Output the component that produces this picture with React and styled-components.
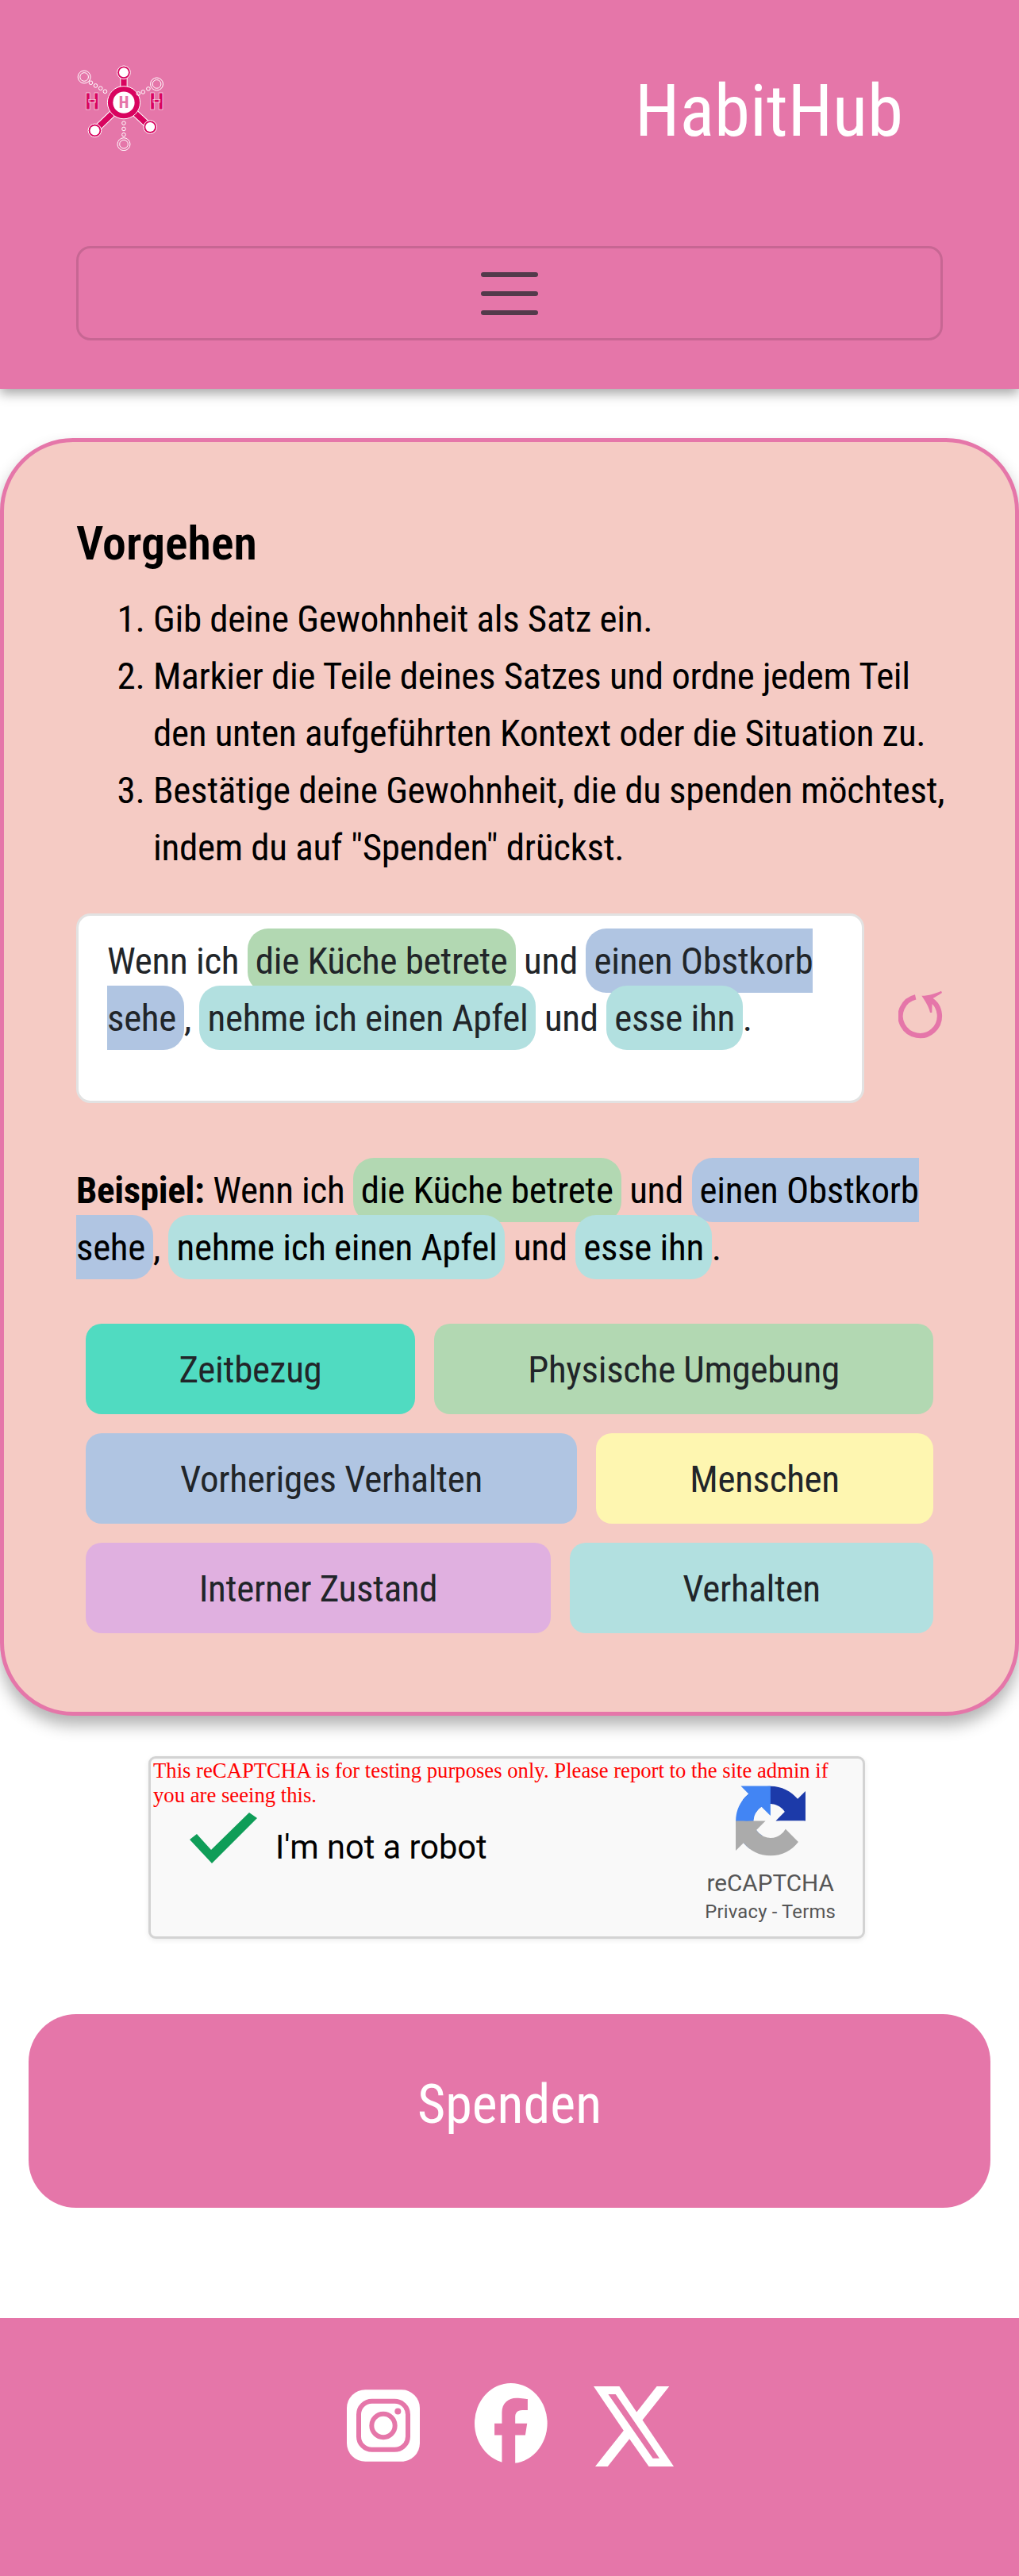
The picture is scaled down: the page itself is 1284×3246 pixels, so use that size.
import React from 'react';
import styled, { createGlobalStyle } from 'styled-components';

const pink = '#e576a9';
const crimson = '#d8045f';

const Global = createGlobalStyle`
  html, body { margin: 0; padding: 0; background: #fff; }
  body {
    font-family: Roboto, sans-serif;
    font-stretch: 75%;
    color: #000;
  }
`;

const Page = styled.div`
  width: 1284px;
  height: 3246px;
  overflow: hidden;
  display: flex;
  flex-direction: column;
`;

const Header = styled.header`
  height: 490px;
  flex: none;
  box-sizing: border-box;
  padding: 82px 96px 0;
  background: ${pink};
  box-shadow: 0 6px 14px rgba(0, 0, 0, 0.35);
  position: relative;
`;

const Brand = styled.div`
  display: flex;
  justify-content: space-between;
  align-items: flex-start;
  height: 228px;
  padding-right: 50px;
`;

const Title = styled.div`
  color: #fff;
  font-size: 91px;
  font-weight: 400;
  line-height: 110px;
  margin-top: 3px;
`;

const Toggle = styled.button`
  display: flex;
  width: 100%;
  height: 119px;
  align-items: center;
  justify-content: center;
  background: transparent;
  border: 3px solid rgba(0, 0, 0, 0.13);
  border-radius: 18px;
  padding: 0;
`;

const Card = styled.main`
  margin-top: 62px;
  height: 1610px;
  flex: none;
  box-sizing: border-box;
  padding: 92px 91px 0;
  background: #f5cbc4;
  border: 5px solid ${pink};
  border-radius: 92px;
  box-shadow: 0 12px 20px rgba(0, 0, 0, 0.3);
`;

const Heading = styled.h2`
  margin: 0 0 23px;
  font-size: 60px;
  line-height: 72px;
  font-weight: 600;
  font-stretch: 75%;
`;

const Steps = styled.ol`
  margin: 0 -20px 47px 0;
  padding: 0 0 0 97px;
  font-size: 47px;
  line-height: 72px;
  letter-spacing: -0.3px;
`;

const EditorRow = styled.div`
  display: flex;
  align-items: center;
  justify-content: space-between;
`;

const Editor = styled.div`
  width: 993px;
  height: 239px;
  box-sizing: border-box;
  padding: 21px 36px;
  background: #fff;
  border: 3px solid #e2e2e2;
  border-radius: 18px;
  font-size: 47px;
  line-height: 72px;
  letter-spacing: -0.3px;
  color: #212529;
`;

const Pill = styled.span`
  background: ${(p) => p.$bg};
  padding: 13px 10px;
  border-radius: 26px;
`;

const Example = styled.p`
  margin: 74px 0 0;
  font-size: 47px;
  line-height: 72px;
  letter-spacing: -0.3px;
`;

const ChipGrid = styled.div`
  margin-top: 60px;
  padding: 0 12px;
  display: flex;
  flex-direction: column;
  gap: 24px;
`;

const ChipRow = styled.div`
  display: flex;
  gap: 24px;
`;

const Chip = styled.div`
  flex: ${(p) => (p.$w ? `0 0 ${p.$w}px` : '1 1 0')};
  height: 114px;
  display: flex;
  align-items: center;
  justify-content: center;
  background: ${(p) => p.$bg};
  border-radius: 20px;
  color: #212529;
  font-size: 47px;
  letter-spacing: -0.3px;
`;

const Captcha = styled.section`
  position: relative;
  align-self: center;
  flex: none;
  width: 903px;
  height: 230px;
  margin: 51px 0 0 -7px;
  box-sizing: border-box;
  background: #f9f9f9;
  border: 3px solid #d3d3d3;
  border-radius: 9px;
  box-shadow: 0 2px 6px rgba(0, 0, 0, 0.08);
  display: flex;
  justify-content: space-between;
  padding: 34px 34px 0 49px;
`;

const CaptchaWarning = styled.div`
  position: absolute;
  left: 3px;
  top: 0;
  right: 25px;
  color: #f00;
  font-family: "Liberation Serif", serif;
  font-stretch: 100%;
  font-size: 26.7px;
  line-height: 31px;
`;

const CheckArea = styled.div`
  display: flex;
  align-items: flex-end;
  gap: 23px;
  height: 98px;
`;

const CheckLabel = styled.span`
  font-stretch: 100%;
  font-size: 41.6px;
  line-height: 56px;
  margin-bottom: -8px;
  color: #000;
`;

const Badge = styled.div`
  display: flex;
  flex-direction: column;
  align-items: center;
  font-stretch: 100%;
  color: #555;
`;

const BadgeName = styled.div`
  margin-top: 16px;
  font-size: 29.7px;
  line-height: 36px;
`;

const BadgeLinks = styled.div`
  font-size: 23.8px;
  line-height: 36px;
  letter-spacing: 0.2px;
`;

const Donate = styled.button`
  margin: 95px 36px 0;
  height: 244px;
  flex: none;
  padding: 0 0 16px;
  background: ${pink};
  border: 0;
  border-radius: 60px;
  color: #fff;
  font-family: inherit;
  font-stretch: 75%;
  font-size: 68px;
  font-weight: 400;
`;

const Footer = styled.footer`
  margin-top: 139px;
  flex: 1;
  background: ${pink};
  display: flex;
  justify-content: center;
  align-items: flex-start;
  padding: 82px 0 0 2px;
  gap: 58px;
`;

const LogoLetter = styled.text`
  font-family: Roboto, sans-serif;
  font-stretch: 75%;
  font-weight: 800;
  text-anchor: middle;
`;

const Logo = () => (
  <svg width="110" height="108" viewBox="105 70 330 325">
    <path d="M285 100V212M175 318L285 212L385 305" fill="none" stroke="#fff" strokeWidth="28" />
    <path d="M285 100V212M175 318L285 212L385 305" fill="none" stroke={crimson} strokeWidth="22" />
    <circle cx="285" cy="212" r="62" fill={crimson} stroke="#fff" strokeWidth="3" />
    <circle cx="285" cy="212" r="41" fill="#fff" />
    <LogoLetter x="285" y="234" fontSize="62" fill={pink}>H</LogoLetter>
    {[[285, 98], [175, 318], [385, 305]].map(([x, y]) => (
      <g key={x}>
        <circle cx={x} cy={y} r="25" fill={crimson} stroke="#fff" strokeWidth="3" />
        <circle cx={x} cy={y} r="18" fill="#fff" />
      </g>
    ))}
    <g fill="none" stroke="#fff" strokeWidth="3">
      {[[135, 115], [410, 142], [285, 370]].map(([x, y]) => (
        <g key={x}>
          <circle cx={x} cy={y} r="24" />
          <circle cx={x} cy={y} r="16" />
        </g>
      ))}
      {[[160, 137], [178, 148], [197, 158], [214, 170], [340, 178], [358, 172], [378, 160], [285, 290], [285, 312], [285, 334]].map(([x, y]) => (
        <circle key={x + '-' + y} cx={x} cy={y} r="7" />
      ))}
    </g>
    <g fontSize="90" fill={crimson} stroke="#fff" strokeWidth="1.5">
      <LogoLetter x="165" y="240">H</LogoLetter>
      <LogoLetter x="410" y="240">H</LogoLetter>
    </g>
  </svg>
);

const Bars = () => (
  <svg width="72" height="54" viewBox="0 0 72 54">
    <g fill="#533a4b">
      <rect x="0" y="0" width="72" height="6" rx="3" />
      <rect x="0" y="24" width="72" height="6" rx="3" />
      <rect x="0" y="48" width="72" height="6" rx="3" />
    </g>
  </svg>
);

const ResetSvg = styled.svg`
  margin-top: 16px;
`;

const ResetIcon = () => (
  <ResetSvg width="56" height="61" viewBox="70 68 168 183">
    <path d="M135 93A74 74 0 1 0 192 103" fill="none" stroke={pink} strokeWidth="19" />
    <path fill={pink} d="M158 88C185 88 210 80 232 70L235 77C220 88 205 95 198 100L197 152L190 152C185 130 172 108 158 88Z" />
  </ResetSvg>
);

const Check = () => (
  <svg width="85" height="64" viewBox="0 0 85 64">
    <path d="M0 34L9 27L27 47L75 0L85 7L28 64Z" fill="#0f9d58" />
  </svg>
);

const ARROW = 'M64 31.955l-.033-1.37V4.687l-7.16 7.16C50.948 4.674 42.033.093 32.05.093c-10.39 0-19.62 4.958-25.455 12.636l11.735 11.86a15.564 15.564 0 0 1 4.754-5.32c2.05-1.6 4.952-2.906 8.96-2.906.484 0 .858.057 1.133.163 4.967.392 9.273 3.133 11.81 7.11l-8.307 8.307c10.52-.04 22.4-.066 27.864.003';

const CaptchaLogo = () => (
  <svg width="88" height="89" viewBox="0 0 64 64">
    <path d={ARROW} fill="#1c3aa9" />
    <path d={ARROW} fill="#4285f4" transform="rotate(-90 32 32)" />
    <path d={ARROW} fill="#ababab" transform="rotate(180 32 32)" />
  </svg>
);

const InstagramSvg = styled.svg`
  margin: 8px 11px 0 0;
`;

const XSvg = styled.svg`
  margin-top: 4px;
`;

const Instagram = () => (
  <InstagramSvg width="92" height="91" viewBox="112 152 276 272">
    <rect x="112" y="152" width="276" height="272" rx="70" fill="#fff" />
    <g fill="none" stroke={pink} strokeWidth="18">
      <rect x="157" y="196" width="186" height="183" rx="50" />
      <circle cx="250" cy="288" r="44" />
    </g>
    <circle cx="305" cy="234" r="12" fill={pink} />
  </InstagramSvg>
);

const Facebook = () => (
  <svg width="92" height="101" viewBox="595 130 275 302">
    <ellipse cx="732" cy="281" rx="137" ry="151" fill="#fff" />
    <path fill={pink} d="M698 432V326H670V282H698V240C698 205 722 186 752 186C772 186 795 190 795 190V232H775C755 232 748 244 748 258V282H793L786 326H748V432Z" />
  </svg>
);

const XLogo = () => (
  <XSvg width="101" height="101" viewBox="1045 140 302 302">
    <path fillRule="evenodd" fill="#fff" d="M1045 140H1142L1207 237L1283 140H1330L1229 267L1347 442H1253L1180 338L1098 442H1051L1158 307ZM1100 170H1128L1293 411H1268Z" />
  </XSvg>
);

const colors = {
  time: '#50dbc1',
  place: '#b2d8b2',
  before: '#b0c5e2',
  people: '#fef6b0',
  state: '#e0b0e0',
  action: '#b2e0e0',
};

const Sentence = () => (
  <>
    Wenn ich <Pill $bg={colors.place}>die Küche betrete</Pill> und <Pill $bg={colors.before}>einen Obstkorb<br />sehe</Pill>, <Pill $bg={colors.action}>nehme ich einen Apfel</Pill> und <Pill $bg={colors.action}>esse ihn</Pill>.
  </>
);

export default function App() {
  return (
    <Page>
      <Global />
      <Header>
        <Brand>
          <Logo />
          <Title>HabitHub</Title>
        </Brand>
        <Toggle aria-label="Menü"><Bars /></Toggle>
      </Header>

      <Card>
        <Heading>Vorgehen</Heading>
        <Steps>
          <li>Gib deine Gewohnheit als Satz ein.</li>
          <li>Markier die Teile deines Satzes und ordne jedem Teil den unten aufgeführten Kontext oder die Situation zu.</li>
          <li>Bestätige deine Gewohnheit, die du spenden möchtest, indem du auf "Spenden" drückst.</li>
        </Steps>
        <EditorRow>
          <Editor><Sentence /></Editor>
          <ResetIcon />
        </EditorRow>
        <Example><b>Beispiel:</b> <Sentence /></Example>
        <ChipGrid>
          <ChipRow>
            <Chip $bg={colors.time} $w={415}>Zeitbezug</Chip>
            <Chip $bg={colors.place}>Physische Umgebung</Chip>
          </ChipRow>
          <ChipRow>
            <Chip $bg={colors.before} $w={619}>Vorheriges Verhalten</Chip>
            <Chip $bg={colors.people}>Menschen</Chip>
          </ChipRow>
          <ChipRow>
            <Chip $bg={colors.state} $w={586}>Interner Zustand</Chip>
            <Chip $bg={colors.action}>Verhalten</Chip>
          </ChipRow>
        </ChipGrid>
      </Card>

      <Captcha>
        <CaptchaWarning>This reCAPTCHA is for testing purposes only. Please report to the site admin if you are seeing this.</CaptchaWarning>
        <CheckArea>
          <Check />
          <CheckLabel>I'm not a robot</CheckLabel>
        </CheckArea>
        <Badge>
          <CaptchaLogo />
          <BadgeName>reCAPTCHA</BadgeName>
          <BadgeLinks>Privacy - Terms</BadgeLinks>
        </Badge>
      </Captcha>

      <Donate>Spenden</Donate>

      <Footer>
        <Instagram />
        <Facebook />
        <XLogo />
      </Footer>
    </Page>
  );
}
